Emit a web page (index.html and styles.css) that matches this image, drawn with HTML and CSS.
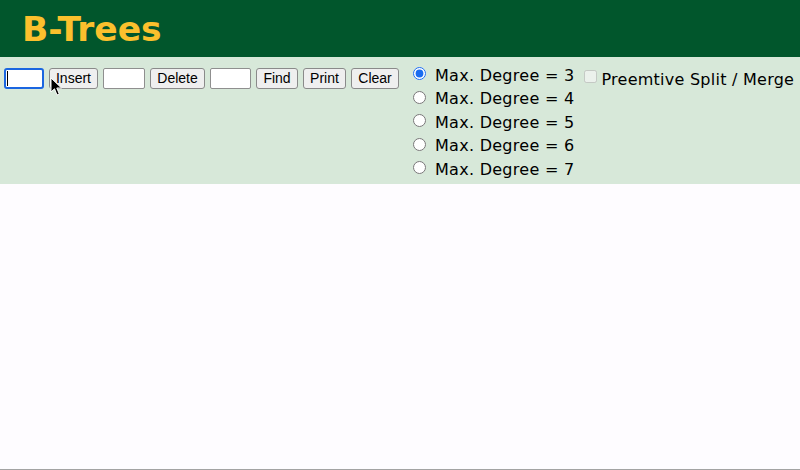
FILE: index.html
```html
<!DOCTYPE html>
<html>
<head>
<meta charset="utf-8">
<title>B-Trees</title>
<link rel="stylesheet" href="styles.css">
</head>
<body>
<header class="header">
  <h1 class="title">B-Trees</h1>
</header>
<div class="panel">
  <div class="controls">
    <span class="field-wrap focused"><input class="field field-a" type="text"></span>
    <button class="btn btn-insert">Insert</button>
    <input class="field field-b" type="text">
    <button class="btn btn-delete">Delete</button>
    <input class="field field-c" type="text">
    <button class="btn btn-find">Find</button>
    <button class="btn btn-print">Print</button>
    <button class="btn btn-clear">Clear</button>
    <svg class="pointer" width="13" height="20" viewBox="0 0 13 20">
      <path d="M1 1 L1 15 L4.5 11.8 L7 18 L9.3 17 L6.8 11 L11.5 11 Z" fill="#000" stroke="#fff" stroke-width="1"/>
    </svg>
  </div>
  <div class="degrees">
    <label class="deg-row"><input class="radio" type="radio" name="deg" checked><span class="txt">Max. Degree = 3</span></label>
    <label class="deg-row"><input class="radio" type="radio" name="deg"><span class="txt">Max. Degree = 4</span></label>
    <label class="deg-row"><input class="radio" type="radio" name="deg"><span class="txt">Max. Degree = 5</span></label>
    <label class="deg-row"><input class="radio" type="radio" name="deg"><span class="txt">Max. Degree = 6</span></label>
    <label class="deg-row"><input class="radio" type="radio" name="deg"><span class="txt">Max. Degree = 7</span></label>
  </div>
  <label class="preempt"><input class="check" type="checkbox" disabled><span class="txt">Preemtive Split / Merge</span></label>
</div>
<div class="canvas-area"></div>
</body>
</html>
```
FILE: styles.css
```css
html, body {
  margin: 0;
  padding: 0;
}
body {
  width: 800px;
  height: 470px;
  overflow: hidden;
  background: #fefcff;
  font-family: "DejaVu Sans", Verdana, sans-serif;
}
.header {
  height: 57px;
  box-sizing: border-box;
  background: #01562c;
  padding-top: 2px;
}
.title {
  margin: 0;
  padding-left: 22px;
  font-family: "DejaVu Sans", Verdana, sans-serif;
  font-weight: bold;
  font-size: 34.5px;
  line-height: 55px;
  color: #fbc02d;
}
.panel {
  height: 127px;
  box-sizing: border-box;
  background: #d7e8d9;
  padding: 5px 0 0 4px;
  display: flex;
  align-items: flex-start;
}
.controls {
  position: relative;
  margin-top: 6px;
  display: flex;
  align-items: center;
  gap: 5px;
}
.field {
  box-sizing: border-box;
  height: 21px;
  margin: 0;
  padding: 1px 2px;
  border: 1px solid #8f8f8f;
  border-radius: 2px;
  background: #fff;
  font-family: "Liberation Sans", Arial, sans-serif;
  font-size: 13px;
  outline: none;
}
.field-a {
  width: 40px;
  border: 2px solid #1a66e0;
  border-radius: 3px;
  display: block;
}
.field-b { width: 42px; }
.field-c { width: 41px; }
.field-wrap {
  position: relative;
  display: block;
}
.field-wrap.focused::after {
  content: "";
  position: absolute;
  left: 3px;
  top: 3px;
  width: 1px;
  height: 15px;
  background: #000;
}
.btn {
  box-sizing: border-box;
  height: 21px;
  margin: 0;
  padding: 0;
  border: 1px solid #8a8a8a;
  border-radius: 3px;
  background: #efefef;
  color: #000;
  font-family: "Liberation Sans", Arial, sans-serif;
  font-size: 14px;
  line-height: 19px;
}
.btn-insert { width: 49px; }
.btn-delete { width: 55px; }
.btn-find { width: 42px; }
.btn-print { width: 43px; }
.btn-clear { width: 48px; }
.pointer {
  position: absolute;
  left: 46px;
  top: 9px;
}
.degrees {
  margin-left: 13px;
  display: flex;
  flex-direction: column;
}
.deg-row {
  height: 23.5px;
  display: flex;
  align-items: center;
  font-size: 16px;
  color: #000;
  letter-spacing: 0.28px;
}
.txt {
  padding-top: 3px;
}
.radio {
  width: 13px;
  height: 13px;
  margin: 0 9px 0 1px;
  accent-color: #1a6cf0;
}
.preempt {
  margin-left: 10px;
  margin-top: 4px;
  height: 23.5px;
  display: flex;
  align-items: center;
  font-size: 16px;
  color: #000;
  letter-spacing: 0.25px;
}
.check {
  width: 13px;
  height: 13px;
  margin: 0 4px 0 0;
  position: relative;
  top: -1px;
}
.canvas-area {
  height: 285px;
  border-bottom: 1px solid #a3a3a3;
  background: #fefcff;
}
```
